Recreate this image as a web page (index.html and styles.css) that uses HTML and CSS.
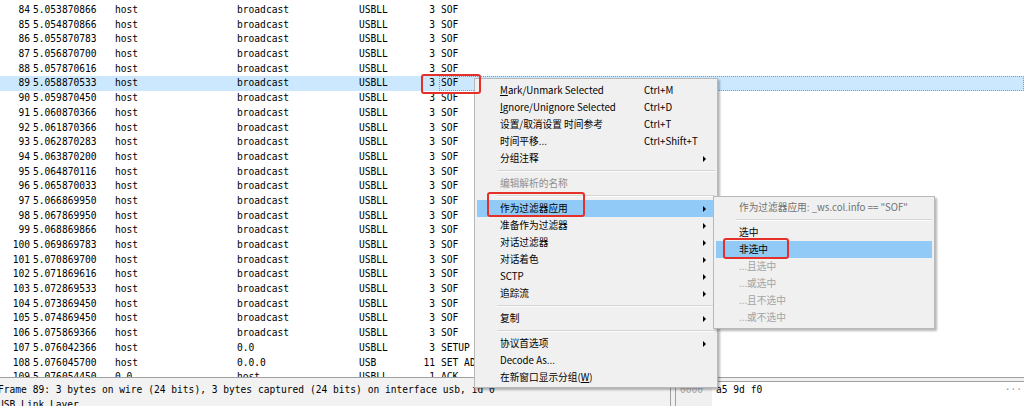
FILE: index.html
```html
<!DOCTYPE html>
<html>
<head>
<meta charset="utf-8">
<link rel="stylesheet" href="styles.css">
</head>
<body>
<div class="app">
  <div class="packet-list">
    <div class="row"><span class="no">84</span><span class="t">5.053870866</span><span>host</span><span>broadcast</span><span>USBLL</span><span class="len">3</span><span class="info">SOF</span></div>
    <div class="row"><span class="no">85</span><span class="t">5.054870866</span><span>host</span><span>broadcast</span><span>USBLL</span><span class="len">3</span><span class="info">SOF</span></div>
    <div class="row"><span class="no">86</span><span class="t">5.055870783</span><span>host</span><span>broadcast</span><span>USBLL</span><span class="len">3</span><span class="info">SOF</span></div>
    <div class="row"><span class="no">87</span><span class="t">5.056870700</span><span>host</span><span>broadcast</span><span>USBLL</span><span class="len">3</span><span class="info">SOF</span></div>
    <div class="row"><span class="no">88</span><span class="t">5.057870616</span><span>host</span><span>broadcast</span><span>USBLL</span><span class="len">3</span><span class="info">SOF</span></div>
    <div class="row sel"><span class="no">89</span><span class="t">5.058870533</span><span>host</span><span>broadcast</span><span>USBLL</span><span class="len">3</span><span class="info">SOF</span></div>
    <div class="row"><span class="no">90</span><span class="t">5.059870450</span><span>host</span><span>broadcast</span><span>USBLL</span><span class="len">3</span><span class="info">SOF</span></div>
    <div class="row"><span class="no">91</span><span class="t">5.060870366</span><span>host</span><span>broadcast</span><span>USBLL</span><span class="len">3</span><span class="info">SOF</span></div>
    <div class="row"><span class="no">92</span><span class="t">5.061870366</span><span>host</span><span>broadcast</span><span>USBLL</span><span class="len">3</span><span class="info">SOF</span></div>
    <div class="row"><span class="no">93</span><span class="t">5.062870283</span><span>host</span><span>broadcast</span><span>USBLL</span><span class="len">3</span><span class="info">SOF</span></div>
    <div class="row"><span class="no">94</span><span class="t">5.063870200</span><span>host</span><span>broadcast</span><span>USBLL</span><span class="len">3</span><span class="info">SOF</span></div>
    <div class="row"><span class="no">95</span><span class="t">5.064870116</span><span>host</span><span>broadcast</span><span>USBLL</span><span class="len">3</span><span class="info">SOF</span></div>
    <div class="row"><span class="no">96</span><span class="t">5.065870033</span><span>host</span><span>broadcast</span><span>USBLL</span><span class="len">3</span><span class="info">SOF</span></div>
    <div class="row"><span class="no">97</span><span class="t">5.066869950</span><span>host</span><span>broadcast</span><span>USBLL</span><span class="len">3</span><span class="info">SOF</span></div>
    <div class="row"><span class="no">98</span><span class="t">5.067869950</span><span>host</span><span>broadcast</span><span>USBLL</span><span class="len">3</span><span class="info">SOF</span></div>
    <div class="row"><span class="no">99</span><span class="t">5.068869866</span><span>host</span><span>broadcast</span><span>USBLL</span><span class="len">3</span><span class="info">SOF</span></div>
    <div class="row"><span class="no">100</span><span class="t">5.069869783</span><span>host</span><span>broadcast</span><span>USBLL</span><span class="len">3</span><span class="info">SOF</span></div>
    <div class="row"><span class="no">101</span><span class="t">5.070869700</span><span>host</span><span>broadcast</span><span>USBLL</span><span class="len">3</span><span class="info">SOF</span></div>
    <div class="row"><span class="no">102</span><span class="t">5.071869616</span><span>host</span><span>broadcast</span><span>USBLL</span><span class="len">3</span><span class="info">SOF</span></div>
    <div class="row"><span class="no">103</span><span class="t">5.072869533</span><span>host</span><span>broadcast</span><span>USBLL</span><span class="len">3</span><span class="info">SOF</span></div>
    <div class="row"><span class="no">104</span><span class="t">5.073869450</span><span>host</span><span>broadcast</span><span>USBLL</span><span class="len">3</span><span class="info">SOF</span></div>
    <div class="row"><span class="no">105</span><span class="t">5.074869450</span><span>host</span><span>broadcast</span><span>USBLL</span><span class="len">3</span><span class="info">SOF</span></div>
    <div class="row"><span class="no">106</span><span class="t">5.075869366</span><span>host</span><span>broadcast</span><span>USBLL</span><span class="len">3</span><span class="info">SOF</span></div>
    <div class="row"><span class="no">107</span><span class="t">5.076042366</span><span>host</span><span>0.0</span><span>USBLL</span><span class="len">3</span><span class="info">SETUP</span></div>
    <div class="row"><span class="no">108</span><span class="t">5.076045700</span><span>host</span><span>0.0.0</span><span>USB</span><span class="len">11</span><span class="info">SET ADDRESS Request</span></div>
    <div class="row"><span class="no">109</span><span class="t">5.076054450</span><span>0.0</span><span>host</span><span>USBLL</span><span class="len">1</span><span class="info">ACK</span></div>
  </div>
  <div class="panes">
    <div class="details">
      <div class="drow">Frame 89: 3 bytes on wire (24 bits), 3 bytes captured (24 bits) on interface usb, id 0</div>
      <div class="drow">USB Link Layer</div>
    </div>
    <div class="hex">
      <span class="off">0000</span><span class="bytes">a5 9d f0</span><span class="ascii">···</span>
    </div>
  </div>
</div>

<div class="menu">
  <div class="mi"><span><u>M</u>ark/Unmark Selected</span><span>Ctrl+M</span></div>
  <div class="mi"><span><u>I</u>gnore/Unignore Selected</span><span>Ctrl+D</span></div>
  <div class="mi"><span>设置/取消设置 时间参考</span><span>Ctrl+T</span></div>
  <div class="mi"><span>时间平移...</span><span>Ctrl+Shift+T</span></div>
  <div class="mi"><span>分组注释</span><span></span><span class="arr"></span></div>
  <div class="sep"></div>
  <div class="mi dis"><span>编辑解析的名称</span></div>
  <div class="sep"></div>
  <div class="mi hl"><span>作为过滤器应用</span><span></span><span class="arr"></span></div>
  <div class="mi"><span>准备作为过滤器</span><span></span><span class="arr"></span></div>
  <div class="mi"><span>对话过滤器</span><span></span><span class="arr"></span></div>
  <div class="mi"><span>对话着色</span><span></span><span class="arr"></span></div>
  <div class="mi"><span>SCTP</span><span></span><span class="arr"></span></div>
  <div class="mi"><span>追踪流</span><span></span><span class="arr"></span></div>
  <div class="sep"></div>
  <div class="mi"><span>复制</span><span></span><span class="arr"></span></div>
  <div class="sep"></div>
  <div class="mi"><span>协议首选项</span><span></span><span class="arr"></span></div>
  <div class="mi"><span>Decode As...</span></div>
  <div class="mi"><span>在新窗口显示分组(<u>W</u>)</span></div>
</div>

<div class="submenu">
  <div class="si head">作为过滤器应用: _ws.col.info == "SOF"</div>
  <div class="ssep"></div>
  <div class="si">选中</div>
  <div class="si hl">非选中</div>
  <div class="si dis">...且选中</div>
  <div class="si dis">...或选中</div>
  <div class="si dis">...且不选中</div>
  <div class="si dis">...或不选中</div>
</div>

<div class="mark mark-row"></div>
<div class="mark mark-menu"></div>
<div class="mark mark-sub"></div>
</body>
</html>
```

FILE: styles.css
```css
html, body {
  margin: 0;
  padding: 0;
}
body {
  width: 1024px;
  height: 406px;
  overflow: hidden;
  position: relative;
  background: #f0f0f0;
  color: #000;
}
.app {
  display: flex;
  flex-direction: column;
  height: 406px;
}
.packet-list {
  box-sizing: border-box;
  flex: 0 0 378px;
  height: 378px;
  padding-top: 3px;
  background: #fff;
  border-bottom: 1px solid #a0a0a0;
  overflow: hidden;
  font-family: "DejaVu Sans Mono", monospace;
  font-size: 9.6px;
}
.row {
  display: grid;
  grid-template-columns: 30px 85px 122px 122px 45px 31px 1fr;
  height: 14.7px;
  line-height: 14.7px;
  white-space: nowrap;
}
.row .no { text-align: right; }
.row .t { padding-left: 3px; }
.row .len { text-align: right; }
.row .info {
  margin-left: 4px;
  padding-left: 2px;
  overflow: hidden;
}
.row.sel { background: #cce8ff; }
.row.sel .info {
  outline: 1px dotted #7d9cbc;
  outline-offset: -1px;
}
.panes {
  display: flex;
  flex: 1 1 auto;
  min-height: 0;
  overflow: hidden;
  font-family: "DejaVu Sans Mono", monospace;
  font-size: 9.6px;
}
.details {
  box-sizing: border-box;
  width: 671px;
  flex: 0 0 671px;
  padding-top: 5px;
  background: #f2f2f2;
  border-right: 1px solid #a0a0a0;
  overflow: hidden;
  white-space: nowrap;
}
.drow {
  height: 14.7px;
  line-height: 14.7px;
  margin-left: -2px;
}
.hex {
  flex: 1;
  display: flex;
  align-items: stretch;
  margin-top: 3px;
  margin-left: 4px;
  background: #fff;
  border-top: 1px solid #a0a0a0;
  border-left: 1px solid #a0a0a0;
  line-height: 14.7px;
  white-space: nowrap;
}
.hex .off {
  width: 32px;
  padding-left: 4px;
  padding-top: 1px;
  color: #a8a8a8;
  background: #f0f0f0;
}
.hex .bytes {
  padding-left: 4px;
  padding-top: 1px;
  flex: 1;
}
.hex .ascii {
  color: #999;
  padding-top: 1px;
  padding-right: 2px;
}

/* context menu */
.menu, .submenu {
  position: absolute;
  box-sizing: border-box;
  background: #f0f0f0;
  border: 1px solid #b8b8b8;
  box-shadow: 2px 2px 2px rgba(0, 0, 0, 0.28);
  font-family: "Noto Sans CJK SC", "Noto Sans", sans-serif;
  font-size: 9.7px;
  color: #000;
}
.menu {
  left: 474px;
  top: 78px;
  width: 244px;
  padding: 3px 2px 1px;
}
.mi {
  display: grid;
  grid-template-columns: 144px 1fr 4px;
  align-items: center;
  height: 17px;
  line-height: 17px;
  padding: 0 8px 0 23px;
  white-space: nowrap;
}
.mi u { text-decoration: underline; text-underline-offset: 1px; }
.mi.hl, .si.hl { background: #91c9f7; }
.mi.dis { color: #8f8f8f; }
.arr {
  width: 0;
  height: 0;
  border-left: 3px solid #000;
  border-top: 3px solid transparent;
  border-bottom: 3px solid transparent;
}
.sep {
  height: 0;
  margin: 3px 0 3px 20px;
  border-top: 1px solid #d5d5d5;
  border-bottom: 1px solid #fbfbfb;
}
.submenu {
  left: 713px;
  top: 196px;
  width: 222px;
  padding: 2px 2px;
}
.si {
  height: 17px;
  line-height: 17px;
  padding-left: 23px;
  white-space: nowrap;
}
.si.head { color: #707070; }
.si.dis { color: #a3a3a3; }
.ssep {
  height: 0;
  margin: 3px 0 3px 20px;
  border-top: 1px solid #d5d5d5;
  border-bottom: 1px solid #fbfbfb;
}

/* red annotation boxes */
.mark {
  position: absolute;
  box-sizing: border-box;
  border: 2px solid #e5302a;
  border-radius: 3px;
}
.mark-row { left: 421px; top: 74px; width: 60px; height: 20px; }
.mark-menu { left: 487px; top: 192px; width: 98px; height: 25px; }
.mark-sub { left: 723px; top: 238px; width: 66px; height: 21px; }
```
